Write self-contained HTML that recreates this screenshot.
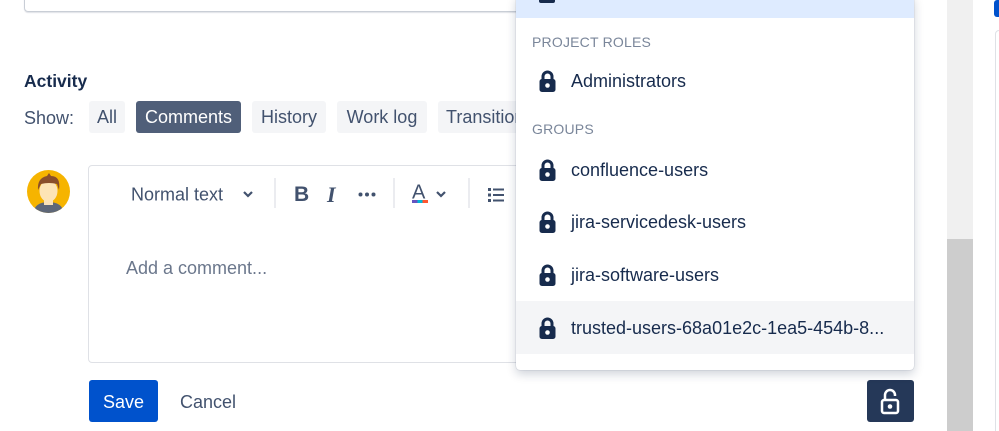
<!DOCTYPE html>
<html><head><meta charset="utf-8"><style>
*{box-sizing:border-box;margin:0;padding:0}
html,body{width:999px;height:431px;overflow:hidden}
body{background:#fff;font-family:"Liberation Sans",sans-serif;color:#172b4d;position:relative}
.a{position:absolute}
.btn{position:absolute;top:101px;height:32px;background:#f4f5f7;border-radius:3px;font-size:18px;line-height:33px;text-align:center;color:#42526e}
.item{position:absolute;left:516px;width:398px;height:53px;font-size:18px;line-height:55px;color:#172b4d}
.item svg{position:absolute;left:23px;top:16px}
.item span{position:absolute;left:55px}
.hdr{position:absolute;left:532px;font-size:14px;color:#7a869a;letter-spacing:.2px}
.tb{position:absolute;top:195px;transform:translateY(-50%);font-size:18px;color:#42526e}
.sep{position:absolute;top:178px;width:2px;height:30px;background:#ebecf0}
</style></head><body>
<div class="a" style="left:24px;top:-10px;width:520px;height:22px;border:1px solid #c9ced6;border-radius:4px;box-shadow:0 1px 1px #dfe1e6"></div>
<div class="a" style="left:24px;top:71px;font-size:17.5px;font-weight:bold">Activity</div>
<div class="a" style="left:24px;top:108px;font-size:18px;color:#42526e">Show:</div>
<div class="btn" style="left:89px;width:36px">All</div>
<div class="btn" style="left:136px;width:105px;background:#505f79;color:#fff">Comments</div>
<div class="btn" style="left:252px;width:74px">History</div>
<div class="btn" style="left:337px;width:90px">Work log</div>
<div class="btn" style="left:438px;width:90px;text-align:left;padding-left:8px">Transitions</div>
<svg class="a" style="left:27px;top:170px" width="43" height="43" viewBox="0 0 43 43"><clipPath id="c"><circle cx="21.5" cy="21.5" r="21.5"/></clipPath><g clip-path="url(#c)"><rect width="43" height="43" fill="#f6b400"/><path d="M6 43 Q8 32 21.5 32 Q35 32 37 43Z" fill="#5e6778"/><rect x="17" y="27" width="9" height="8" fill="#fbe2b8"/><ellipse cx="21.5" cy="21" rx="9" ry="11" fill="#fde4b6"/><path d="M11 20 Q10 8 20 6 L22 3 L24 6 Q34 6 32 20 L30 14 Q22 12 14 14Z" fill="#8a4e2a"/></g></svg>
<div class="a" style="left:88px;top:165px;width:460px;height:198px;border:1px solid #dfe1e6;border-radius:4px"></div>
<div class="tb" style="left:131px">Normal text</div>
<svg class="a" style="left:242px;top:190px" width="12" height="9"><path d="M2 2l4 4 4-4" stroke="#42526e" stroke-width="2.2" fill="none"/></svg>
<div class="sep" style="left:274px"></div>
<div class="tb" style="left:294px;font-weight:bold;font-size:21px">B</div>
<div class="tb" style="left:327px;font-style:italic;font-size:22px;font-family:'Liberation Serif',serif;font-weight:bold">I</div>
<svg class="a" style="left:358px;top:192px" width="18" height="5"><g fill="#42526e"><circle cx="2.5" cy="2.5" r="2"/><circle cx="9" cy="2.5" r="2"/><circle cx="15.5" cy="2.5" r="2"/></g></svg>
<div class="sep" style="left:393px"></div>
<div class="tb" style="left:412px;font-size:20px;top:193px">A</div>
<div class="a" style="left:412px;top:200px;width:16px;height:3px;background:linear-gradient(90deg,#6554c0 0 33%,#00b8d9 33% 66%,#ff5630 66%)"></div>
<svg class="a" style="left:435px;top:190px" width="12" height="9"><path d="M2 2l4 4 4-4" stroke="#42526e" stroke-width="2.2" fill="none"/></svg>
<div class="sep" style="left:468px"></div>
<svg class="a" style="left:488px;top:187px" width="18" height="16"><g fill="#42526e"><rect x="0" y="1" width="3" height="3"/><rect x="0" y="6.5" width="3" height="3"/><rect x="0" y="12" width="3" height="3"/><rect x="5" y="1.5" width="11" height="2"/><rect x="5" y="7" width="11" height="2"/><rect x="5" y="12.5" width="11" height="2"/></g></svg>
<div class="a" style="left:126px;top:258px;font-size:18px;color:#6b778c">Add a comment...</div>
<div class="a" style="left:89px;top:380px;width:69px;height:42px;background:#0052cc;border-radius:3px;color:#fff;font-size:18px;line-height:44px;text-align:center">Save</div>
<div class="a" style="left:180px;top:392px;font-size:18px;color:#42526e">Cancel</div>
<div class="a" style="left:867px;top:380px;width:47px;height:42px;background:#253858;border-radius:3px"></div>
<svg class="a" style="left:879px;top:387px" width="22" height="28" viewBox="0 0 22 28"><path d="M6 13V8a5 5 0 0 1 10 0v1" stroke="#fff" stroke-width="2.5" fill="none"/><rect x="3" y="13" width="16" height="13" rx="2" stroke="#fff" stroke-width="2.5" fill="none"/><circle cx="11" cy="19.5" r="2.3" fill="#fff"/></svg>
<div class="a" style="left:516px;top:-5px;width:398px;height:375px;background:#fff;border-radius:4px;box-shadow:0 4px 10px rgba(9,30,66,.2),0 0 1px rgba(9,30,66,.35)"></div>
<div class="a" style="left:516px;top:0;width:398px;height:18px;background:#deebff"></div>
<div class="a" style="left:539px;top:0;width:16px;height:3px;background:#172b4d;border-radius:0 0 2px 2px"></div>
<div class="hdr" style="top:34px">PROJECT ROLES</div>
<div class="hdr" style="top:121px">GROUPS</div>
<div class="item" style="top:54px"><svg width="17" height="22" viewBox="0 0 17 22"><path d="M4 10V6.5a4.5 4.5 0 0 1 9 0V10" stroke="#172b4d" stroke-width="3" fill="none"/><rect x="0.5" y="9" width="16" height="13" rx="2.5" fill="#172b4d"/><circle cx="8.5" cy="15.5" r="2.3" fill="#fff"/></svg><span>Administrators</span></div>
<div class="item" style="top:143px"><svg width="17" height="22" viewBox="0 0 17 22"><path d="M4 10V6.5a4.5 4.5 0 0 1 9 0V10" stroke="#172b4d" stroke-width="3" fill="none"/><rect x="0.5" y="9" width="16" height="13" rx="2.5" fill="#172b4d"/><circle cx="8.5" cy="15.5" r="2.3" fill="#fff"/></svg><span>confluence-users</span></div>
<div class="item" style="top:195px"><svg width="17" height="22" viewBox="0 0 17 22"><path d="M4 10V6.5a4.5 4.5 0 0 1 9 0V10" stroke="#172b4d" stroke-width="3" fill="none"/><rect x="0.5" y="9" width="16" height="13" rx="2.5" fill="#172b4d"/><circle cx="8.5" cy="15.5" r="2.3" fill="#fff"/></svg><span>jira-servicedesk-users</span></div>
<div class="item" style="top:248px"><svg width="17" height="22" viewBox="0 0 17 22"><path d="M4 10V6.5a4.5 4.5 0 0 1 9 0V10" stroke="#172b4d" stroke-width="3" fill="none"/><rect x="0.5" y="9" width="16" height="13" rx="2.5" fill="#172b4d"/><circle cx="8.5" cy="15.5" r="2.3" fill="#fff"/></svg><span>jira-software-users</span></div>
<div class="item" style="top:301px;background:#f4f5f7"><svg width="17" height="22" viewBox="0 0 17 22"><path d="M4 10V6.5a4.5 4.5 0 0 1 9 0V10" stroke="#172b4d" stroke-width="3" fill="none"/><rect x="0.5" y="9" width="16" height="13" rx="2.5" fill="#172b4d"/><circle cx="8.5" cy="15.5" r="2.3" fill="#fff"/></svg><span>trusted-users-68a01e2c-1ea5-454b-8...</span></div>
<div class="a" style="left:947px;top:0;width:26px;height:431px;background:#f0f0f0"></div>
<div class="a" style="left:947px;top:239px;width:26px;height:192px;background:#cdcdcd"></div>
<div class="a" style="left:994px;top:0;width:8px;height:17px;background:#0052cc;border-radius:3px"></div>
<div class="a" style="left:995px;top:30px;width:10px;height:410px;border:1px solid #dfe1e6;border-radius:4px"></div>
</body></html>
